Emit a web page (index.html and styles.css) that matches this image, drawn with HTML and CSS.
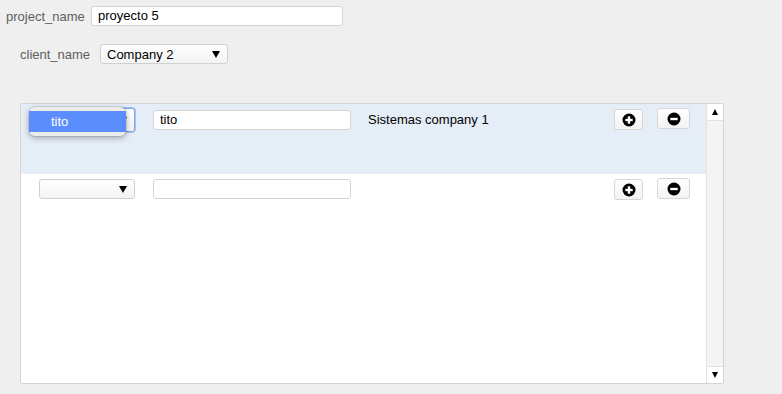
FILE: index.html
```html
<!DOCTYPE html>
<html>
<head>
<meta charset="utf-8">
<link rel="stylesheet" href="styles.css">
</head>
<body>
<div class="field field-project">
  <label class="lbl">project_name</label>
  <div class="input input-project">proyecto 5</div>
</div>
<div class="field field-client">
  <label class="lbl">client_name</label>
  <div class="select select-client"><span class="sel-text">Company 2</span><span class="arrow"></span></div>
</div>

<div class="panel">
  <div class="rows">
    <div class="row row-active">
      <div class="select select-row focused"><span class="sel-text"></span><span class="arrow"></span></div>
      <div class="input input-row">tito</div>
      <div class="cell-text">Sistemas company 1</div>
      <div class="btn btn-plus"><svg width="14" height="14" viewBox="0 0 14 14"><circle cx="7" cy="7" r="6.5" fill="#000"/><rect x="3.3" y="5.8" width="7.4" height="2.4" fill="#fff"/><rect x="5.8" y="3.3" width="2.4" height="7.4" fill="#fff"/></svg></div>
      <div class="btn btn-minus"><svg width="14" height="14" viewBox="0 0 14 14"><circle cx="7" cy="7" r="6.5" fill="#000"/><rect x="3.3" y="5.8" width="7.4" height="2.4" fill="#fff"/></svg></div>
      <div class="popup"><div class="popup-item">tito</div></div>
    </div>
    <div class="row">
      <div class="select select-row"><span class="sel-text"></span><span class="arrow"></span></div>
      <div class="input input-row"></div>
      <div class="cell-text"></div>
      <div class="btn btn-plus"><svg width="14" height="14" viewBox="0 0 14 14"><circle cx="7" cy="7" r="6.5" fill="#000"/><rect x="3.3" y="5.8" width="7.4" height="2.4" fill="#fff"/><rect x="5.8" y="3.3" width="2.4" height="7.4" fill="#fff"/></svg></div>
      <div class="btn btn-minus"><svg width="14" height="14" viewBox="0 0 14 14"><circle cx="7" cy="7" r="6.5" fill="#000"/><rect x="3.3" y="5.8" width="7.4" height="2.4" fill="#fff"/></svg></div>
    </div>
  </div>
  <div class="scrollbar">
    <div class="sb-btn sb-up"><span class="tri-up"></span></div>
    <div class="sb-track"></div>
    <div class="sb-btn sb-down"><span class="tri-down"></span></div>
  </div>
</div>
</body>
</html>
```

FILE: styles.css
```css
* { box-sizing: border-box; }
html, body { margin: 0; padding: 0; }
body {
  background: #efefef;
  font-family: "Liberation Sans", Arial, sans-serif;
  font-size: 13px;
  color: #000;
  width: 782px;
  height: 394px;
  overflow: hidden;
}
.field { display: flex; align-items: center; }
.field-project { padding: 6px 0 0 6px; height: 26px; }
.field-client { padding: 18px 0 0 20px; height: 38px; }
.lbl { color: #5e5e5e; font-size: 13px; }
.field-project .lbl { width: 85px; }
.field-client .lbl { width: 80px; }

.input {
  background: #fff;
  border: 1px solid #d4d4d4;
  border-radius: 3px;
  height: 20px;
  line-height: 18px;
  padding: 0 6px;
  font-size: 13px;
}
.input-project { width: 252px; }
.input-row { width: 198px; flex: none; }

.select {
  display: flex;
  align-items: center;
  justify-content: space-between;
  height: 20px;
  border: 1px solid #d0d0d0;
  border-radius: 3px;
  background: linear-gradient(#ffffff, #f3f3f3);
  padding: 0 6px;
  flex: none;
}
.select-client { width: 128px; }
.select-row { width: 96px; }
.arrow {
  width: 0; height: 0;
  border-left: 4px solid transparent;
  border-right: 4px solid transparent;
  border-top: 7px solid #000;
  margin-right: 1px;
}
.select.focused {
  border-color: #7ea4e4;
  box-shadow: 0 0 0 1px #a9c3ef;
  height: 24px;
  margin-top: -1px;
}

.panel {
  margin-left: 20px;
  margin-top: 39px;
  width: 704px;
  height: 281px;
  background: #fff;
  border: 1px solid #d4d4d4;
  border-radius: 2px;
  display: flex;
}
.rows { flex: 1; }
.row {
  position: relative;
  display: flex;
  align-items: flex-start;
  padding: 5px 0 0 18px;
  height: 70px;
}
.row-active { background: #e5edf7; }
.row-active .input-row { margin-top: 1px; }
.select-row + .input-row { margin-left: 18px; }
.cell-text { width: 246px; margin-left: 17px; flex: none; padding-top: 3px; }
.btn {
  flex: none;
  display: flex;
  align-items: center;
  justify-content: center;
  height: 21px;
  border: 1px solid #d6d6d6;
  border-radius: 3px;
  background: linear-gradient(#ffffff, #f3f3f3);
}
.btn-plus { width: 29px; }
.btn-minus { width: 33px; margin-left: 14px; margin-top: -1px; }

.popup {
  position: absolute;
  left: 8px;
  top: 3px;
  width: 97px;
  height: 29px;
  background: #ececec;
  border-radius: 6px;
  box-shadow: 0 2px 6px rgba(0,0,0,0.3), 0 0 0 1px rgba(0,0,0,0.08);
  padding-top: 4px;
}
.popup-item {
  background: #5c8dfd;
  color: #fff;
  height: 21px;
  line-height: 21px;
  padding-left: 22px;
  font-size: 13px;
}

.scrollbar {
  width: 17px;
  flex: none;
  display: flex;
  flex-direction: column;
  background: #f4f4f4;
  border-left: 1px solid #e2e2e2;
}
.sb-btn {
  height: 17px;
  display: flex;
  align-items: center;
  justify-content: center;
  background: #fff;
}
.sb-up { border-bottom: 1px solid #e2e2e2; }
.sb-down { border-top: 1px solid #e2e2e2; }
.sb-track { flex: 1; }
.tri-up {
  width: 0; height: 0;
  border-left: 3.5px solid transparent;
  border-right: 3.5px solid transparent;
  border-bottom: 6px solid #000;
}
.tri-down {
  width: 0; height: 0;
  border-left: 3.5px solid transparent;
  border-right: 3.5px solid transparent;
  border-top: 6px solid #000;
}
```
